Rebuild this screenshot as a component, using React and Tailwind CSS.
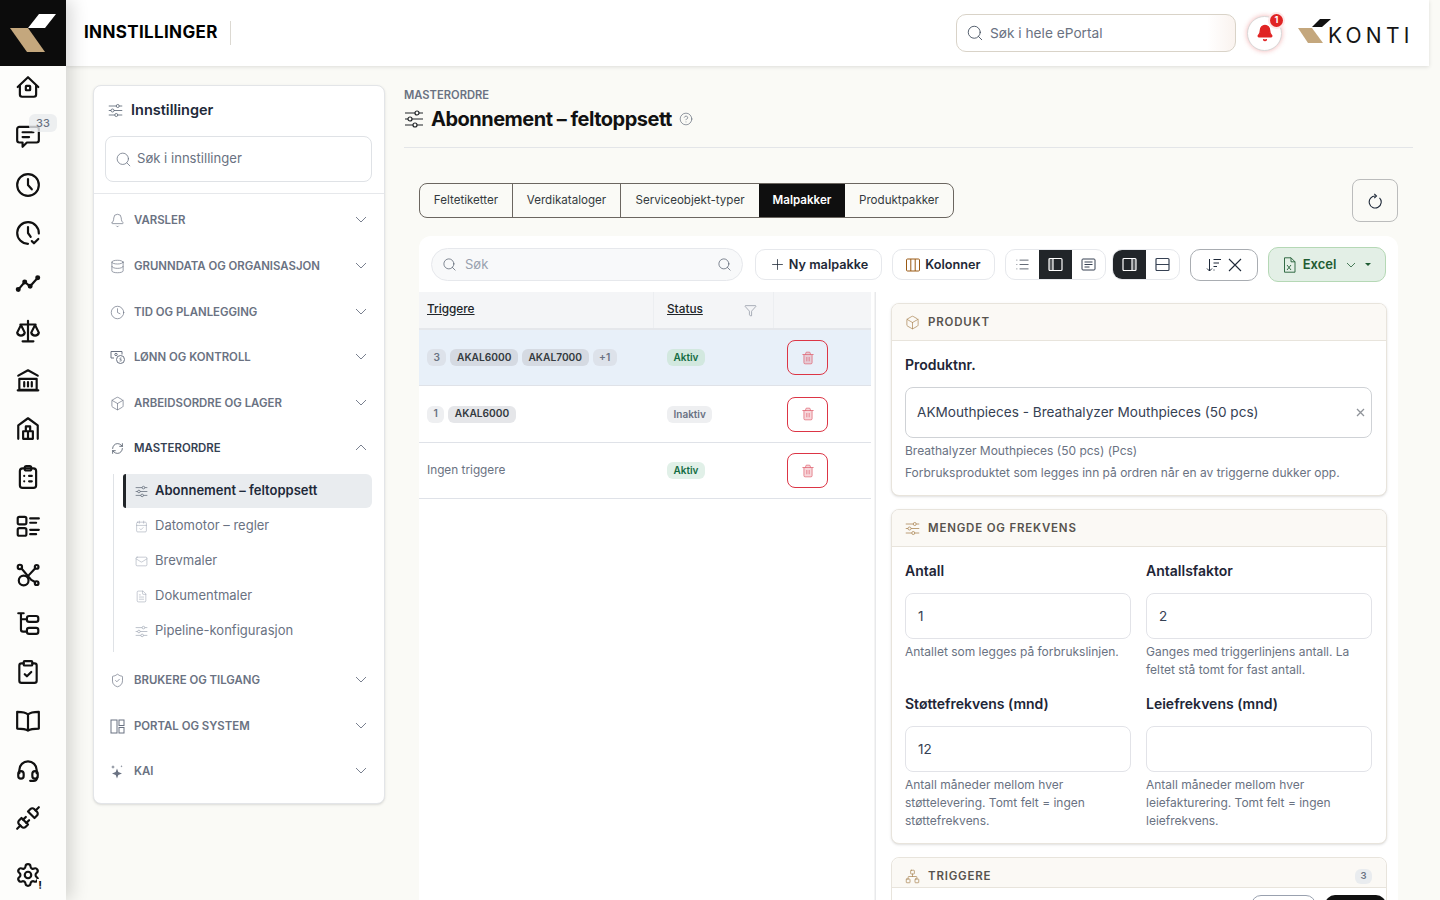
import React from 'react';
import {
  Search, Bell, Database, Clock, Box, RefreshCw, CalendarCheck, Mail, FileText,
  ShieldCheck, Plus, Trash2, Funnel, CircleHelp, ClipboardCheck, Unplug, Settings, Network, List,
} from 'lucide-react';

const S = ({ children, sw = 2, className = '' }) => (
  <svg width="26" height="26" viewBox="0 0 24 24" fill="none" stroke="currentColor" strokeWidth={sw} strokeLinecap="round" strokeLinejoin="round" className={className}>{children}</svg>
);

const railIcons = [
  <S><path d="M2.5 12 12 3l9.5 9" /><path d="M4.500 10.500V19a2 2 0 0 0 2 2h11a2 2 0 0 0 2-2v-8.500" /><rect x="10" y="11" width="4" height="4" rx=".5" /></S>,
  <S><path d="M4 3.500h16a2 2 0 0 1 2 2V16a2 2 0 0 1-2 2h-9l-4 4v-4H4a2 2 0 0 1-2-2V5.500a2 2 0 0 1 2-2z" /><path d="M7 8.500h10M7 13h6" /></S>,
  <S><circle cx="12" cy="12" r="10" /><path d="M12 6.500V12l3.500 4" /></S>,
  <S><path d="M22 12.500A10 10 0 1 0 12 22" /><path d="M12 6.500V12l2.500 3.500" /><path d="m15.500 19.500 2 2 4-4" /></S>,
  <S><path d="M3 19l6-7 5 4 7-8" /><circle cx="3" cy="19" r="1.300" fill="currentColor" /><circle cx="9" cy="12" r="1.300" fill="currentColor" /><circle cx="14" cy="16" r="1.300" fill="currentColor" /><circle cx="21" cy="8" r="1.300" fill="currentColor" /></S>,
  <S><path d="M12 2.500V21M7 21.500h10M5 6h14" /><path d="M5.500 6.500 2 13.500a3.600 3.600 0 0 0 7 0z" /><path d="M18.500 6.500 15 13.500a3.600 3.600 0 0 0 7 0z" /></S>,
  <S><path d="M3 8 12 3l9 5" /><path d="M4 11h16v10H4zM2.500 21.500h19" /><path d="M8.500 14v4M12 14v4M15.500 14v4" /></S>,
  <S><path d="M3 22V9.500L12 3l9 6.500V22" /><path d="M7.500 22v-7h9v7M7.500 22h9M10 15v-4.500h4V15M12 15v7" /></S>,
  <S><rect x="4.500" y="4" width="15" height="18" rx="2.500" /><rect x="9" y="2" width="6" height="4" rx="1.500" /><path d="M8.500 11h.01M8.500 16h.01M13 11h2.500M13 16h2.500" /></S>,
  <S><rect x="2.500" y="3.500" width="8" height="7" rx="1.500" /><rect x="2.500" y="14" width="8" height="7" rx="1.500" /><path d="M14 5h8M14 9h5.500M14 15.500h8M14 19.500h5.500" /></S>,
  <S><circle cx="4.500" cy="4.500" r="2" /><circle cx="20" cy="4.500" r="1.700" /><circle cx="20" cy="19.500" r="1.700" /><circle cx="8" cy="17" r="4.500" /><path d="m6 6 9 10.500 3.500 2M18.500 6l-7 7.500" /></S>,
  <S><path d="M3 3h5M5.500 3v15a2 2 0 0 0 2 2H11M5.500 8.500H11" /><rect x="11" y="5.500" width="10.500" height="5.500" rx="2" /><rect x="11" y="16.500" width="10.500" height="5.500" rx="2" /></S>,
  <ClipboardCheck size={26} strokeWidth={2} />,
  <S><path d="M12 6C10 4 6 3.500 2 3.500V19c4 0 8 .5 10 2 2-1.500 6-2 10-2V3.500C18 3.500 14 4 12 6zM12 6v15" /></S>,
  <S><path d="M4 15v-3a8 8 0 0 1 16 0v3" /><rect x="3" y="13" width="5" height="7" rx="2.500" /><rect x="16" y="13" width="5" height="7" rx="2.500" /><path d="M20.500 19a3.500 3.500 0 0 1-3.500 3h-3" /></S>,
  <Unplug size={26} strokeWidth={2} />,
];

function Sliders({ size = 15, sw = 1, className = '' }) {
  return (
    <svg width={size} height={size} viewBox="0 0 20 20" fill="none" stroke="currentColor" strokeWidth={sw} className={className}>
      <path d="M1 4h10M15 4h4M1 10h3M8 10h11M1 16h8M13 16h6" />
      <circle cx="13" cy="4" r="2" /><circle cx="6" cy="10" r="2" /><circle cx="11" cy="16" r="2" />
    </svg>
  );
}

function Chev({ up }) {
  return (
    <svg width="12" height="7" viewBox="0 0 12 7" fill="none" stroke="currentColor" strokeWidth="0.900" className="-mt-[2px] text-gray-500">
      <path d={up ? 'M1 6l5-5 5 5' : 'M1 1l5 5 5-5'} />
    </svg>
  );
}

const PortalIcon = () => (
  <svg width="15" height="15" viewBox="0 0 15 15" fill="none" stroke="currentColor" strokeWidth="1">
    <rect x="1" y="1" width="6" height="13" /><rect x="9" y="1" width="5" height="5.500" /><rect x="9" y="8.500" width="5" height="5.500" />
  </svg>
);
const PayIcon = () => (
  <svg width="15" height="15" viewBox="0 0 15 15" fill="none" stroke="currentColor" strokeWidth="1">
    <path d="M1 8V1.500h11V4.500M1 8h3" /><circle cx="6" cy="4.500" r="1.200" /><circle cx="10.500" cy="9.500" r="4" /><path d="M11.500 8h-1.500v1.500h1.200v1.500H9.500" strokeWidth=".7" />
  </svg>
);
const KaiIcon = () => (
  <svg width="15" height="15" viewBox="0 0 15 15" fill="currentColor">
    <path d="M7 4.500 8.300 8 12 9.500 8.300 11 7 14.500 5.700 11 2 9.500 5.700 8z" />
    <path d="M3 1l.5 1.500L5 3l-1.500.5L3 5l-.5-1.500L1 3l1.500-.5zM11.500 1l.3 1 .9.3-.9.3-.3 1-.3-1-.9-.3.9-.3z" />
  </svg>
);

const sections = [
  ['VARSLER', <Bell size={15} strokeWidth={1.100} />],
  ['GRUNNDATA OG ORGANISASJON', <Database size={15} strokeWidth={1.100} />],
  ['TID OG PLANLEGGING', <Clock size={15} strokeWidth={1.100} />],
  ['LØNN OG KONTROLL', <PayIcon />],
  ['ARBEIDSORDRE OG LAGER', <Box size={15} strokeWidth={1.100} />],
];
const sections2 = [
  ['BRUKERE OG TILGANG', <ShieldCheck size={15} strokeWidth={1.100} />],
  ['PORTAL OG SYSTEM', <PortalIcon />],
  ['KAI', <KaiIcon />],
];
const sub = [
  ['Datomotor – regler', <CalendarCheck size={13} strokeWidth={1} />],
  ['Brevmaler', <Mail size={13} strokeWidth={1} />],
  ['Dokumentmaler', <FileText size={13} strokeWidth={1} />],
  ['Pipeline-konfigurasjon', <Sliders size={13} />],
];

function SectionRow({ label, icon, open, h = 'h-[45.700px]' }) {
  return (
    <div className={`flex items-center pl-4 pr-[17px] ${h}`}>
      <span className={`flex w-[24px] shrink-0 ${open ? 'text-gray-700' : 'text-gray-500'}`}>{icon}</span>
      <span className={`flex-1 text-[11.400px] font-semibold ${open ? 'text-gray-700' : 'text-gray-500'}`}>{label}</span>
      <Chev up={open} />
    </div>
  );
}

function Sidebar() {
  return (
    <nav className="mt-[19px] w-[292px] shrink-0 self-start rounded-lg border border-[#e3e5e8] bg-white pb-[9px] shadow-sm">
      <div className="flex h-[50px] items-center gap-2 px-[14px] pb-[2px]">
        <Sliders size={15} className="text-gray-600" />
        <span className="text-[14.500px] font-semibold text-gray-800">Innstillinger</span>
      </div>
      <div className="ml-[11px] mr-[12px] flex h-[46px] items-center gap-[5px] rounded-lg border border-[#dfe2e6] px-[9px]">
        <Search size={17} strokeWidth={1.100} className="text-gray-500" />
        <span className="text-[13.100px] text-gray-500">Søk i innstillinger</span>
      </div>
      <div className="mt-[11px] border-t border-[#e6e8eb] pt-[4px]">
        {sections.map(([l, ic]) => <SectionRow key={l} label={l} icon={ic} />)}
        <div className="-mt-px">
          <SectionRow label="MASTERORDRE" icon={<RefreshCw size={13} strokeWidth={1.300} className="ml-px mt-px" />} open />
        </div>
        <div className="ml-[19px] mr-3 mt-[3px] border-l border-[#dfe2e6] pl-[9px] pb-[4px]">
          <div className="flex h-[34px] items-center gap-[7px] rounded-r-md rounded-l-[3px] border-l-[3px] border-[#212529] bg-[#e9ecef] pl-[9px] text-[13px] font-semibold text-gray-800">
            <Sliders size={13} className="text-gray-600" />
            Abonnement – feltoppsett
          </div>
          {sub.map(([l, ic]) => (
            <div key={l} className="mt-px flex h-[34px] items-center gap-[7px] pl-[12px] text-[13px] text-gray-500">
              <span className="flex text-gray-400">{ic}</span>
              {l}
            </div>
          ))}
        </div>
        <div className="pt-[6px]">
          {sections2.map(([l, ic]) => <SectionRow key={l} label={l} icon={ic} h="h-[45.400px]" />)}
        </div>
      </div>
    </nav>
  );
}

function ToolBtn({ children, className = '' }) {
  return <div className={`flex items-center justify-center ${className}`}>{children}</div>;
}

function PanelGlyph({ side = 'left', horizontal }) {
  return (
    <svg width="15" height="15" viewBox="0 0 15 15" fill="none" stroke="currentColor" strokeWidth="1.200">
      <rect x="1" y="1.500" width="13" height="12" rx="1" />
      {horizontal ? <path d="M1 7.500h13" /> : <path d={side === 'left' ? 'M5 1.500v12' : 'M10 1.500v12'} />}
      {!horizontal && <rect x={side === 'left' ? 1 : 10} y="1.500" width="4" height="12" fill="currentColor" fillOpacity=".25" stroke="none" />}
    </svg>
  );
}

function Toolbar() {
  return (
    <div className="flex items-center px-3 pt-[11px]">
      <div className="flex h-[33px] w-[312px] items-center gap-2 rounded-full border border-[#e6e8ec] bg-[#f8f9fa] px-[10px]">
        <Search size={15} strokeWidth={1.100} className="text-gray-600" />
        <span className="flex-1 text-[13px] text-gray-400">Søk</span>
        <Search size={15} strokeWidth={1.100} className="text-gray-600" />
      </div>
      <ToolBtn className="ml-3 h-[31px] w-[127px] gap-[3px] rounded-[10px] border border-[#e6e8ec] text-[12.700px] font-semibold text-[#1f2937]">
        <Plus size={17} strokeWidth={1.100} />Ny malpakke
      </ToolBtn>
      <ToolBtn className="ml-[10px] h-[31px] w-[103px] gap-[5px] rounded-[10px] border border-[#e6e8ec] text-[12.700px] font-semibold text-[#1f2937]">
        <svg width="14" height="14" viewBox="0 0 14 14" fill="none" stroke="#9a5a14" strokeWidth="1"><rect x=".5" y="1" width="13" height="12" rx="1" /><path d="M4.800 1v12M9.200 1v12" /></svg>
        Kolonner
      </ToolBtn>
      <div className="ml-[10px] flex h-[31px] w-[101px] overflow-hidden rounded-[10px] border border-[#e6e8ec]">
        <ToolBtn className="flex-1 text-gray-800"><List size={15} strokeWidth={1.100} /></ToolBtn>
        <ToolBtn className="flex-1 bg-[#212529] text-white"><PanelGlyph /></ToolBtn>
        <ToolBtn className="flex-1 text-gray-700">
          <svg width="15" height="13" viewBox="0 0 15 13" fill="none" stroke="currentColor"><rect x="1" y="1" width="13" height="11" rx="1" /><path d="M3.500 4h8M3.500 6.500h8M3.500 9h5" /></svg>
        </ToolBtn>
      </div>
      <div className="ml-[6px] flex h-[31px] w-[68px] overflow-hidden rounded-[10px] border border-[#e6e8ec]">
        <ToolBtn className="flex-1 bg-[#212529] text-white"><PanelGlyph side="right" /></ToolBtn>
        <ToolBtn className="flex-1 text-gray-700"><PanelGlyph horizontal /></ToolBtn>
      </div>
      <ToolBtn className="ml-[10px] h-[32px] w-[68px] gap-[6px] rounded-[10px] border border-[#a9adb2] text-gray-800">
        <svg width="16" height="14" viewBox="0 0 16 14" fill="none" stroke="currentColor" strokeWidth="1"><path d="M3.500 1v12M1 10.500 3.500 13 6 10.500M7.500 1.500H15M7.500 5H13M7.500 8.500H11M7.500 12H8.500" /></svg>
        <svg width="14" height="14" viewBox="0 0 14 14" fill="none" stroke="currentColor" strokeWidth="1.100"><path d="M1 1l12 12M13 1 1 13" /></svg>
      </ToolBtn>
      <ToolBtn className="ml-[10px] h-[35px] w-[118px] gap-[7px] rounded-[10px] border border-[#b5d8b5] bg-[#e3efe6] text-[13px] font-semibold text-[#1f5c33]">
        <svg width="13" height="16" viewBox="0 0 13 16" fill="none" stroke="currentColor" strokeWidth=".9"><path d="M1.500.8h6.500l4 4v10.400h-10.500zM8 .8v4h4" /><path d="m4 8 4 5M8 8l-4 5" /></svg>
        <span>Excel</span>
        <svg width="10" height="6" viewBox="0 0 10 6" fill="none" stroke="currentColor" strokeWidth=".8" className="ml-[3px]"><path d="m1 1 4 4 4-4" /></svg>
        <span className="ml-[2px] h-0 w-0 border-x-[3px] border-t-[3px] border-x-transparent border-t-[#1f5c33]" />
      </ToolBtn>
    </div>
  );
}

const Chip = ({ children, tone }) => (
  <span className={`flex h-[17px] items-center rounded-[6px] px-[6.500px] text-[10.200px] font-semibold ${tone}`}>{children}</span>
);

function Row({ h, bg = '', chips, status, statusTone }) {
  return (
    <div className={`flex items-center border-b border-[#dfe2e8] ${h} ${bg}`}>
      <div className="flex w-[235px] items-center gap-1 pl-2">{chips}</div>
      <div className="flex w-[120px] pl-[13px]"><span className={`flex h-[17px] items-center rounded-[6px] px-[6.500px] text-[10px] font-semibold ${statusTone}`}>{status}</span></div>
      <div className="flex-1 pl-[13px]">
        <div className="flex h-[35px] w-[41px] items-center justify-center rounded-[8px] border border-[#dc3545] text-[#e0606f]">
          <Trash2 size={14} strokeWidth={1.200} fill="currentColor" fillOpacity={0.25} />
        </div>
      </div>
    </div>
  );
}

function TablePane() {
  return (
    <div className="w-[452px] shrink-0">
      <div className="flex h-[38px] items-center border-b-2 border-[#e5e7eb] bg-[#f4f5f7] text-[11.800px] font-medium text-[#212529]">
        <div className="flex h-full w-[235px] items-center border-r border-[#eceef1] pl-2"><span className="underline">Triggere</span></div>
        <div className="flex h-full w-[120px] items-center justify-between border-r border-[#eceef1] pl-[13px] pr-4"><span className="underline">Status</span><Funnel size={13} strokeWidth={1} className="text-gray-500" /></div>
      </div>
      <Row h="h-[56px]" bg="bg-[#e8f0f9]" status="Aktiv" statusTone="bg-[#d2e8df] text-[#146c43]" chips={<>
        <Chip tone="bg-[#dde2ea] text-gray-500">3</Chip>
        <Chip tone="bg-[#d5dae2] text-[#343a40]">AKAL6000</Chip>
        <Chip tone="bg-[#d5dae2] text-[#343a40]">AKAL7000</Chip>
        <Chip tone="bg-[#dde2ea] text-gray-500">+1</Chip>
      </>} />
      <Row h="h-[57px]" status="Inaktiv" statusTone="bg-[#eeeff1] text-gray-500" chips={<>
        <Chip tone="bg-[#eeeff1] text-gray-500">1</Chip>
        <Chip tone="bg-[#e5e6e9] text-[#343a40]">AKAL6000</Chip>
      </>} />
      <Row h="h-[56px]" status="Aktiv" statusTone="bg-[#e1f0e8] text-[#146c43]" chips={<span className="text-[11.800px] text-gray-500">Ingen triggere</span>} />
    </div>
  );
}

function CardHead({ icon, title, right, tall = true }) {
  return (
    <div className={`flex items-center justify-between border-b border-[#e8e4dc] bg-[#fbf9f5] pl-[13px] pr-[14px] ${tall ? 'h-[37px] pt-px' : 'h-[30px] pt-[8px]'}`}>
      <div className="flex items-center gap-[8px] text-[11.500px] font-semibold tracking-[0.800px] text-[#57534e]">
        {icon}{title}
      </div>
      {right}
    </div>
  );
}

function Field({ label, value, help }) {
  return (
    <div className="min-w-0 flex-1">
      <div className="flex h-[18px] items-center text-[14px] font-semibold text-[#212536]">{label}</div>
      <div className="mt-[14px] flex h-[46px] items-center rounded-lg border border-[#e2e3e8] bg-white px-3 text-[13.500px] text-gray-700">{value}</div>
      <p className="mt-[4px] text-[12px] leading-[18px] text-gray-500">{help}</p>
    </div>
  );
}

function FormPane() {
  return (
    <div className="ml-[20px] mt-[11px] flex w-[496px] shrink-0 flex-col gap-[13px]">
      <section className="overflow-hidden rounded-lg border border-[#e8e4dc] bg-white shadow-sm">
        <CardHead title="PRODUKT" icon={<Box size={15} strokeWidth={1.100} className="text-[#a8824f]" />} />
        <div className="pl-[13px] pr-[14px] pb-[13px] pt-[14px]">
          <div className="flex h-[18px] items-center text-[14px] font-semibold text-[#212536]">Produktnr.</div>
          <div className="mt-[14px] flex h-[51px] items-center justify-between rounded-lg border border-[#cfd2d6] px-[11px] text-[13.600px] text-gray-700">
            <span>AKMouthpieces - Breathalyzer Mouthpieces (50 pcs)</span>
            <svg width="9" height="9" viewBox="0 0 9 9" fill="none" stroke="#8f9399" strokeWidth="1.300" className="-mr-[5px]"><path d="m1 1 7 7M8 1 1 8" /></svg>
          </div>
          <p className="mt-[4px] text-[12px] leading-[18px] text-gray-500">Breathalyzer Mouthpieces (50 pcs) (Pcs)</p>
          <p className="mt-[4px] text-[12px] leading-[18px] text-gray-500">Forbruksproduktet som legges inn på ordren når en av triggerne dukker opp.</p>
        </div>
      </section>
      <section className="overflow-hidden rounded-lg border border-[#e8e4dc] bg-white shadow-sm">
        <CardHead title="MENGDE OG FREKVENS" icon={<Sliders size={15} className="text-[#a8824f]" />} />
        <div className="pl-[13px] pr-[14px] pb-[13px] pt-[14px]">
          <div className="flex gap-[15px]">
            <Field label="Antall" value="1" help="Antallet som legges på forbrukslinjen." />
            <Field label="Antallsfaktor" value="2" help="Ganges med triggerlinjens antall. La feltet stå tomt for fast antall." />
          </div>
          <div className="mt-[15px] flex gap-[15px]">
            <Field label="Støttefrekvens (mnd)" value="12" help="Antall måneder mellom hver støttelevering. Tomt felt = ingen støttefrekvens." />
            <Field label="Leiefrekvens (mnd)" value="" help="Antall måneder mellom hver leiefakturering. Tomt felt = ingen leiefrekvens." />
          </div>
        </div>
      </section>
      <section className="rounded-t-lg border border-[#e8e4dc] bg-white">
        <div className="overflow-hidden rounded-t-lg">
          <CardHead tall={false} title="TRIGGERE" icon={<Network size={15} strokeWidth={1.100} className="text-[#a8824f]" />}
            right={<span className="flex h-[15px] w-[17px] items-center justify-center rounded-[6px] bg-[#e9ecef] text-[9.500px] font-semibold text-gray-500">3</span>} />
        </div>
        <div className="flex justify-end gap-[9px] pt-[7px]">
          <div className="h-[30px] w-[65px] rounded-[10px] border border-gray-400" />
          <div className="h-[30px] w-[61px] rounded-[10px] bg-[#111]" />
        </div>
      </section>
    </div>
  );
}

function Tabs() {
  const t = ['Feltetiketter', 'Verdikataloger', 'Serviceobjekt-typer', 'Malpakker', 'Produktpakker'];
  const w = ['w-[93px]', 'w-[108px]', 'w-[138px]', 'w-[86px]', 'w-[108px]'];
  return (
    <div className="mt-[35px] flex h-[35px] overflow-hidden rounded-lg border border-[#6b6660]">
      {t.map((x, i) => (
        <div key={x} className={`flex items-center justify-center text-[11.600px] ${w[i]} ${x === 'Malpakker' ? 'bg-[#0f0f0f] font-semibold text-white' : 'text-[#343a40]'} ${i < 2 ? 'border-r border-[#6b6660]' : ''}`}>{x}</div>
      ))}
    </div>
  );
}

export default function App() {
  return (
    <div className="flex h-[900px] w-[1440px] overflow-hidden bg-[#fafaf6] font-['Inter',sans-serif]">
      <aside className="relative z-20 flex h-full w-[66px] shrink-0 flex-col items-center bg-[#fdfdfb] pr-[10px] text-[#111] shadow-[6px_0_16px_rgba(0,0,0,0.15)]">
        <div className="-mr-[10px] flex h-[66px] w-[66px] shrink-0 items-center justify-center self-start bg-[#0c0c0c]">
          <svg width="66" height="66" viewBox="0 0 66 66">
            <polygon points="39,14 56,14 45,28 28,28" fill="#fff" />
            <polygon points="10,28 28,28 45,52 27,52" fill="#c4a77d" />
          </svg>
        </div>
        <div className="relative flex flex-col items-center gap-[22.750px] pt-[8px]">
          {railIcons.map((ic, i) => <div key={i} className="flex h-[26px] w-[26px] items-center justify-center">{ic}</div>)}
          <span className="absolute left-[14px] top-[48px] flex h-[18px] w-[28px] items-center justify-center rounded-md bg-[#e9ebee]/80 text-[11px] font-medium text-gray-500">33</span>
        </div>
        <div className="relative mt-auto mb-[12px] flex h-[26px] w-[26px] items-center justify-center">
          <Settings size={26} strokeWidth={2} />
          <span className="absolute -right-[2px] bottom-[-3px] bg-[#fdfdfb] px-px text-[11px] font-bold leading-[12px]">!</span>
        </div>
      </aside>
      <div className="flex min-w-0 flex-1 flex-col">
        <header className="relative z-10 mr-[11px] flex h-[66px] shrink-0 items-center bg-white pl-[18px] pr-[16px] shadow-[0_1px_4px_rgba(0,0,0,0.12)]">
          <span className="text-[17px] font-bold tracking-[0.350px] text-black">INNSTILLINGER</span>
          <span className="ml-3 h-[24px] w-px bg-[#dcd9d2]" />
          <div className="ml-auto flex h-[38px] w-[280px] items-center gap-[6px] rounded-[10px] border border-[#d9d3c8] bg-gradient-to-r from-white from-90% to-[#faf3ef] px-[9px]">
            <Search size={18} strokeWidth={1.100} className="text-gray-700" />
            <span className="text-[13.700px] text-gray-500">Søk i hele ePortal</span>
          </div>
          <div className="relative ml-[11px] flex h-[35px] w-[35px] items-center justify-center rounded-full border border-[#d8d8d8] bg-white shadow-[0_0_5px_rgba(220,38,38,0.35)]">
            <Bell size={18} strokeWidth={2} fill="#e02424" className="text-[#e02424]" />
            <span className="absolute -right-[2px] -top-[3px] flex h-[13px] w-[13px] items-center justify-center rounded-full bg-[#e02424] text-[9px] font-bold text-white ring-2 ring-[#fde8e8]">1</span>
          </div>
          <div className="relative ml-[16px] flex h-[30px] w-[115px] items-end">
            <svg className="absolute left-0 top-0" width="36" height="30" viewBox="0 0 36 30">
              <polygon points="14,9 22,1 33,1 24,9" fill="#111" />
              <polygon points="0,10 14,10 25,25 10,25" fill="#c4a77d" />
            </svg>
            <span className="ml-[30px] text-[21px] font-normal leading-[24px] tracking-[4.200px] text-[#151515]">KONTI</span>
          </div>
        </header>
        <div className="flex min-h-0 flex-1 pl-[27px]">
          <Sidebar />
          <main className="ml-[19px] flex w-[1009px] shrink-0 flex-col">
            <div className="pt-[23px] text-[11.200px] font-semibold leading-[13px] text-gray-500">MASTERORDRE</div>
            <div className="mt-[5px] flex h-[24px] items-center">
              <Sliders size={20} sw={1.200} className="text-[#212529]" />
              <h1 className="ml-[7px] text-[20px] font-bold tracking-[-0.500px] text-[#111]">Abonnement – feltoppsett</h1>
              <CircleHelp size={14} strokeWidth={1} className="ml-[7px] text-gray-600" />
            </div>
            <div className="mt-[16px] border-t border-[#e3e5e8]" />
            <div className="flex items-start justify-between pl-[15px] pr-[15px]">
              <Tabs />
              <div className="mt-[31px] flex h-[43px] w-[46px] items-center justify-center rounded-lg border border-[#bbbcbc] text-gray-800">
                <svg width="16" height="16" viewBox="0 0 16 16" fill="none" stroke="currentColor" strokeWidth="1.100"><path d="M12.500 4.800A6 6 0 1 1 8.500 3" /><path d="M7.300 .8 9.500 3 7.300 5.200" /></svg>
              </div>
            </div>
            <div className="mx-[15px] mt-[14px] flex-1 rounded-t-xl bg-white">
              <Toolbar />
              <div className="mt-[10px] flex h-full">
                <TablePane />
                <div className="ml-[3px] h-full w-[2px] border-r border-[#e8e9eb] bg-[#f4f4f4]" />
                <div className="-ml-[5px]"><FormPane /></div>
              </div>
            </div>
          </main>
        </div>
      </div>
    </div>
  );
}
